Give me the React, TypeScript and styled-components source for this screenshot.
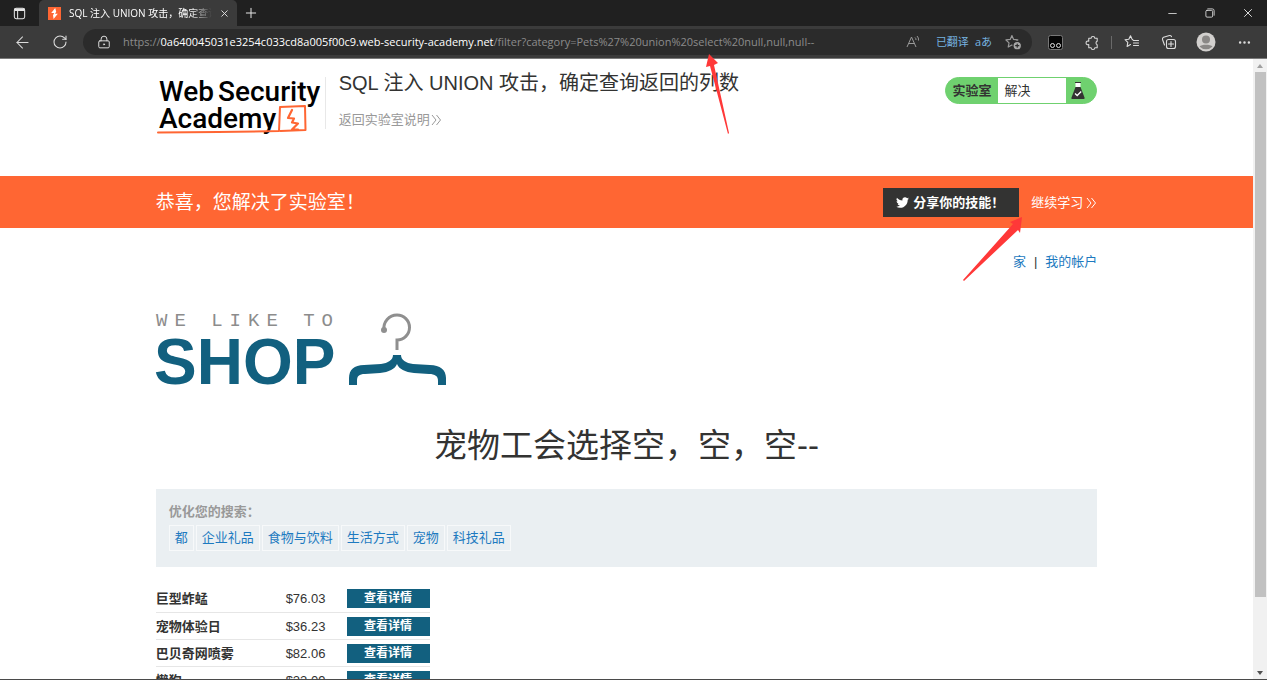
import React from "react";
import styled, { createGlobalStyle } from "styled-components";
import {
  ArrowLeft,
  RotateCw,
  LockKeyhole,
  X,
  Plus,
  Minus,
  Ellipsis,
} from "lucide-react";

const cjk = `"Noto Sans CJK SC", sans-serif`;
const uiFont = `"Open Sans", ${cjk}`;
const pageFont = `"Liberation Sans", ${cjk}`;

const GlobalStyle = createGlobalStyle`
  * { box-sizing: border-box; }
  body { margin: 0; background: #fff; }
  h1, h2, p { margin: 0; font-weight: 400; }
  a { text-decoration: none; }
  button { font: inherit; border: 0; padding: 0; background: none; color: inherit; cursor: pointer; }
  svg { display: block; flex: none; overflow: visible; }
`;

const Window = styled.div`
  position: relative;
  display: flex;
  flex-direction: column;
  height: 100vh;
  overflow: hidden;
  font-family: ${pageFont};
  font-size: 13px;
  line-height: 20px;
  color: #333332;
  border-bottom: 1px solid #4a4a4a;
`;

const TabStrip = styled.div`
  flex: none;
  display: flex;
  height: 26px;
  background: #202020;
  color: #e6e6e6;
  font-family: ${uiFont};
`;

const IconButton = styled.button<{ $w: number }>`
  display: flex;
  align-items: center;
  justify-content: center;
  flex: none;
  width: ${(p) => p.$w}px;
  height: 100%;
`;

const Tab = styled.div`
  display: flex;
  align-items: center;
  width: 198px;
  padding-left: 9px;
  background: #3b3b3b;
  border-radius: 5px 5px 0 0;
`;

const TabTitle = styled.span`
  flex: 1;
  margin-left: 8px;
  overflow: hidden;
  white-space: nowrap;
  font-size: 10px;
  color: #fff;
  mask-image: linear-gradient(to right, #000 85%, transparent);
`;

const Spacer = styled.div`
  flex: 1;
`;

const Toolbar = styled.div`
  flex: none;
  display: flex;
  align-items: center;
  height: 33px;
  padding: 0 4px;
  background: #3b3b3b;
  border-bottom: 1px solid #7a7a7a;
  color: #dcdcdc;
  font-family: ${uiFont};
`;

const AddressBar = styled.div`
  flex: 1;
  display: flex;
  align-items: center;
  height: 26px;
  margin-left: 5px;
  padding: 0 10px 0 14px;
  border-radius: 13px;
  background: #2b2b2b;
  min-width: 0;
`;

const Url = styled.span`
  flex: 1;
  margin-left: 12px;
  overflow: hidden;
  white-space: nowrap;
  font-size: 11px;
  color: #8c8c8c;
  b {
    font-weight: 400;
    color: #fff;
  }
`;

const Translated = styled.button`
  display: flex;
  gap: 6px;
  margin: 0 13px 0 16px;
  font-size: 11px;
  color: #76b3e0;
`;

const Divider = styled.span`
  width: 1px;
  height: 13px;
  margin: 0 1px 0 5px;
  background: #6a6a6a;
`;

const Viewport = styled.div`
  flex: 1;
  display: flex;
  min-height: 0;
`;

const Page = styled.main`
  flex: 1;
  overflow: hidden;
`;

const Container = styled.div`
  width: calc(75% + 2px);
  margin: 0 auto;
`;

const Header = styled(Container)`
  display: flex;
  align-items: flex-start;
  height: 117px;
  padding-top: 11px;
`;

const LogoLink = styled.a`
  margin-top: 7px;
  height: 52px;
  border-right: 1px solid #e8e8e8;
`;

const HeaderText = styled.div`
  flex: 1;
  display: flex;
  margin-left: 13px;
  flex-direction: column;
  align-items: flex-start;
  gap: 14px;
`;

const LabTitle = styled.h2`
  font-size: 20px;
  line-height: 26px;
`;

const MoreLink = styled.a<{ $color: string; $gap: number }>`
  display: inline-flex;
  align-items: center;
  gap: ${(p) => p.$gap}px;
  color: ${(p) => p.$color};
`;

const Status = styled.div`
  display: flex;
  width: 152px;
  height: 27px;
  margin-top: 7px;
  border: 1px solid #6fd16f;
  border-radius: 14px;
  background: #6fd16f;
  line-height: 26px;
  b {
    width: 52px;
    padding-left: 6px;
  }
  span {
    flex: 1;
    padding-left: 6px;
    background: #fff;
  }
  svg {
    margin: 4px 11px 0 5px;
  }
`;

const Banner = styled.section`
  background: #ff6633;
  color: #fff;
`;

const BannerRow = styled(Container)`
  display: flex;
  align-items: center;
  height: 52px;
  padding-top: 1px;
  gap: 12px;
`;

const BannerText = styled.p`
  flex: 1;
  font-size: 19px;
`;

const ShareButton = styled.button`
  display: flex;
  align-items: center;
  gap: 4px;
  height: 29px;
  width: 136px;
  padding-left: 13px;
  background: #333332;
  font-weight: 700;
`;

const TopLinks = styled.nav`
  display: flex;
  justify-content: flex-end;
  gap: 8px;
  padding-top: 24px;
  margin-bottom: 40px;
  a {
    color: #1d7ac0;
  }
`;

const Heading = styled.h1`
  margin: 33px 0 18px;
  font-size: 33px;
  line-height: 50px;
  text-align: center;
`;

const Filters = styled.section`
  height: 78px;
  padding: 13px;
  background: #eaeff2;
`;

const FilterLabel = styled.p`
  font-weight: 700;
  color: #999;
`;

const FilterList = styled.div`
  display: flex;
  gap: 2px;
  margin-top: 3px;
`;

const Filter = styled.a`
  padding: 2px 5px;
  border: 1px solid #f7f9fa;
  color: #1d7ac0;
`;

const Products = styled.table`
  margin-top: 18px;
  width: 274px;
  border-collapse: collapse;
  table-layout: fixed;
  th,
  td {
    height: 27px;
    padding: 4px 0 3px;
    border-bottom: 1px solid #e6e6e6;
    text-align: left;
    line-height: 19px;
    vertical-align: top;
  }
  th {
    width: 130px;
  }
  th + td {
    width: 61px;
  }
`;

const Details = styled.a`
  display: block;
  background: #12607f;
  color: #fff;
  font-size: 12px;
  font-weight: 700;
  text-align: center;
`;

const Scrollbar = styled.div`
  flex: none;
  display: flex;
  flex-direction: column;
  align-items: center;
  justify-content: space-between;
  width: 14px;
  padding: 5px 0 4px;
  background: #f1f1f1;
`;

const Thumb = styled.div`
  width: 11px;
  height: 86%;
  margin-bottom: auto;
  margin-top: 4px;
  background: #c1c1c1;
`;

const Arrow = styled.svg`
  position: absolute;
  pointer-events: none;
`;

const FirstArrow = styled(Arrow)`
  left: 704px;
  top: 54px;
`;

const SecondArrow = styled(Arrow)`
  left: 962px;
  top: 216px;
`;

const Chevrons = () => (
  <svg width="11" height="12" viewBox="0 0 11 12" fill="none" stroke="currentColor">
    <path d="M1 1l4 5-4 5M5.500 1l4 5-4 5" />
  </svg>
);

const Stroke = ({ size = 16, children }: { size?: number; children: React.ReactNode }) => (
  <svg
    width={size}
    height={size}
    viewBox="0 0 16 16"
    fill="none"
    stroke="currentColor"
    strokeWidth="1.1"
    strokeLinejoin="round"
    strokeLinecap="round"
  >
    {children}
  </svg>
);

const star = "M6.500 1.500l1.600 3.600 4 .5-3 2.700.8 4-3.400-2-3.500 2 .8-4-2.900-2.700 4-.5z";

const Favicon = () => (
  <svg width="13" height="13" viewBox="0 0 13 13">
    <path fill="#ff6633" d="M0 0h13v13H0z" />
    <path fill="#fff" d="M7.200 1L3.200 6h3L5 8.200l.6 3.800L9.800 6.800H7L8.200 4.800z" />
  </svg>
);

const AcademyLogo = () => (
  <svg width="169" height="60" viewBox="0 0 169 60" aria-label="Web Security Academy">
    <g fill="#000" fontFamily="Roboto, sans-serif" fontSize="28" fontWeight="500">
      <text x="3" y="24">Web</text>
      <text x="62" y="24">Security</text>
      <text x="3" y="51">Academy</text>
    </g>
    <g fill="none" stroke="#ff6633" strokeWidth="2" strokeLinejoin="round" strokeLinecap="round">
      <path d="M2 55.500l60-.5 61-1 1-24 25-1 .5 24-25 1" />
      <path strokeWidth="2.200" d="M136 33l-4 8 6 .5-2 4 6 1-6 6h6" />
    </g>
  </svg>
);

const ShopLogo = () => (
  <svg width="291" height="76" viewBox="0 0 291 76" aria-label="We like to shop">
    <text x="0" y="14" fill="#8c8c8c" fontFamily="Liberation Mono, monospace" fontSize="19" letterSpacing="7">
      WE LIKE TO
    </text>
    <text x="-2" y="72" fill="#12607f" fontFamily="Liberation Sans, sans-serif" fontSize="64" fontWeight="700">
      SHOP
    </text>
    <path fill="none" stroke="#8f8f8f" strokeWidth="3" d="M228 18c-1-8 5-15 13-15a12.500 12.500 0 0 1 0 25v10" />
    <circle cx="228" cy="18" r="3" fill="#8f8f8f" />
    <path
      fill="#12607f"
      d="M193 73v-7c0-8 5-13 15-13l17-1c7-1 12-4 12-9h8c0 5 5 8 12 9l17 1c10 0 16 5 16 13v7h-8v-4c0-5-3-7-9-7l-15-1c-9-1-15-4-17-9-2 5-8 8-17 9l-15 1c-6 0-8 2-8 7v4z"
    />
  </svg>
);

const FlaskIcon = () => (
  <svg width="14" height="18" viewBox="0 0 14 18">
    <path fill="#fff" d="M4.500 1h5v4h-5z" />
    <path fill="#333332" d="M4.500 5h5l4 10.500c.4 1-.2 1.500-1 1.500h-11c-.8 0-1.400-.5-1-1.500z" />
    <path fill="none" stroke="#333332" d="M4 .5h6" />
    <path fill="none" stroke="#fff" strokeWidth="1.300" d="M4 11.500l2.200 2 4-4" />
  </svg>
);

const TwitterIcon = () => (
  <svg width="13" height="13" viewBox="0 0 24 24" fill="#fff">
    <path d="M23.950 4.570a10 10 0 0 1-2.820.770 4.960 4.960 0 0 0 2.160-2.720 9.900 9.900 0 0 1-3.120 1.180 4.920 4.920 0 0 0-8.380 4.480C7.690 8.090 4.070 6.130 1.640 3.160a4.920 4.920 0 0 0 1.520 6.570 4.900 4.900 0 0 1-2.230-.610v.060a4.920 4.920 0 0 0 3.950 4.830 5 5 0 0 1-2.210.080 4.940 4.940 0 0 0 4.600 3.420A9.870 9.870 0 0 1 0 19.540a14 14 0 0 0 7.550 2.210c9.050 0 14-7.500 14-13.980 0-.210 0-.420-.020-.630a9.940 9.940 0 0 0 2.460-2.550z" />
  </svg>
);

const categories = ["都", "企业礼品", "食物与饮料", "生活方式", "宠物", "科技礼品"];

const products = [
  ["巨型蚱蜢", "$76.03"],
  ["宠物体验日", "$36.23"],
  ["巴贝奇网喷雾", "$82.06"],
  ["懒狗", "$22.09"],
];

const BrowserChrome = () => (
  <>
    <TabStrip>
      <IconButton $w={39} aria-label="标签操作">
        <Stroke size={15}>
          <rect x="2.500" y="2.500" width="11" height="11" rx="2" />
          <path strokeWidth="2.500" d="M3.500 4h9" />
          <path d="M6 5v8" />
        </Stroke>
      </IconButton>
      <Tab>
        <Favicon />
        <TabTitle>SQL 注入 UNION 攻击，确定查询返回的列数</TabTitle>
        <IconButton $w={25} aria-label="关闭标签页">
          <X size={11} />
        </IconButton>
      </Tab>
      <IconButton $w={28} aria-label="新建标签页">
        <Plus size={16} strokeWidth={1.5} />
      </IconButton>
      <Spacer />
      <IconButton $w={38} aria-label="最小化">
        <Minus size={13} strokeWidth={1.5} />
      </IconButton>
      <IconButton $w={38} aria-label="还原">
        <Stroke size={12}>
          <rect x="2.500" y="4.500" width="9" height="9" rx="1.500" />
          <path d="M5 2.500h6a2.500 2.500 0 0 1 2.500 2.500v6" />
        </Stroke>
      </IconButton>
      <IconButton $w={38} aria-label="关闭">
        <X size={14} strokeWidth={1.6} />
      </IconButton>
    </TabStrip>
    <Toolbar>
      <IconButton $w={37} aria-label="返回">
        <ArrowLeft size={19} strokeWidth={1.3} />
      </IconButton>
      <IconButton $w={37} aria-label="刷新">
        <RotateCw size={16} strokeWidth={1.6} />
      </IconButton>
      <AddressBar>
        <LockKeyhole size={14} strokeWidth={1.7} />
        <Url>
          https://<b>0a640045031e3254c033cd8a005f00c9.web-security-academy.net</b>
          /filter?category=Pets%27%20union%20select%20null,null,null--
        </Url>
        <IconButton $w={14} aria-label="大声朗读">
          <svg width="14" height="14" viewBox="0 0 14 14" fill="none" stroke="#999">
            <path d="M1 12L5.500 2 10 12M2.500 8.500h6M9 2.500a3 3 0 0 1 1 2.500M11 1a5 5 0 0 1 1.500 4.500" />
          </svg>
        </IconButton>
        <Translated>
          <span>已翻译</span>
          <span>aあ</span>
        </Translated>
        <IconButton $w={17} aria-label="收藏">
          <Stroke size={17}>
            <path stroke="#999" d={star} />
            <circle cx="11.500" cy="11" r="4" fill="#a8a8a8" stroke="#2b2b2b" />
            <path stroke="#2b2b2b" d="M11.500 9.500v3M10 11h3" />
          </Stroke>
        </IconButton>
      </AddressBar>
      <IconButton $w={46} aria-label="扩展程序">
        <svg width="15" height="15" viewBox="0 0 15 15">
          <rect x=".5" y=".5" width="14" height="14" rx="2" fill="#050505" stroke="#777" />
          <g fill="none" stroke="#ddd">
            <circle cx="4.500" cy="10.500" r="2" />
            <circle cx="10.500" cy="10.500" r="2" />
          </g>
        </svg>
      </IconButton>
      <IconButton $w={28} aria-label="扩展">
        <Stroke size={15}>
          <path d="M4 3.500h2.500a2 2 0 0 1 4 0H13v3.200a1.900 1.900 0 0 0 0 3.600v3.200h-2.500a2 2 0 0 1-4 0H4v-3.300a2 2 0 1 1 0-3.600z" />
        </Stroke>
      </IconButton>
      <Divider />
      <IconButton $w={38} aria-label="收藏夹">
        <Stroke>
          <path d="M9 6l-1-.9L6.500 1.800 4.800 5.200 1 5.700l2.800 2.700-.7 4 3.400-1.900M9.500 6.500h5M9.500 9h5M9.500 11.500h5" />
        </Stroke>
      </IconButton>
      <IconButton $w={36} aria-label="集锦">
        <Stroke>
          <rect x="5.500" y="5.500" width="9" height="9" rx="2" />
          <path d="M10 7.500v5M7.500 10h5M3.500 11l-2-5.500c-.3-1 .2-1.800 1-2.200l6-1.800c1-.2 1.800.3 2 1.200" />
        </Stroke>
      </IconButton>
      <IconButton $w={38} aria-label="个人资料">
        <svg width="20" height="20" viewBox="0 0 20 20">
          <circle cx="10" cy="10" r="9.500" fill="#d2d0ce" />
          <circle cx="10" cy="7.500" r="4" fill="#8a8886" />
          <path d="M3.500 14.500c2-2.500 11-2.500 13 0a9 9 0 0 1-13 0z" fill="#8a8886" />
        </svg>
      </IconButton>
      <IconButton $w={38} aria-label="设置及其他">
        <Ellipsis size={15} />
      </IconButton>
    </Toolbar>
  </>
);

export default function App() {
  return (
    <Window lang="zh-CN">
      <GlobalStyle />
      <BrowserChrome />
      <Viewport>
        <Page>
          <Header as="header">
            <LogoLink href="#">
              <AcademyLogo />
            </LogoLink>
            <HeaderText>
              <LabTitle>SQL 注入 UNION 攻击，确定查询返回的列数</LabTitle>
              <MoreLink href="#" $color="#999" $gap={1}>
                返回实验室说明
                <Chevrons />
              </MoreLink>
            </HeaderText>
            <Status>
              <b>实验室</b>
              <span>解决</span>
              <FlaskIcon />
            </Status>
          </Header>
          <Banner>
            <BannerRow>
              <BannerText>恭喜，您解决了实验室！</BannerText>
              <ShareButton>
                <TwitterIcon />
                分享你的技能！
              </ShareButton>
              <MoreLink href="#" $color="#fff" $gap={3}>
                继续学习
                <Chevrons />
              </MoreLink>
            </BannerRow>
          </Banner>
          <Container>
            <TopLinks>
              <a href="#">家</a>
              <span>|</span>
              <a href="#">我的帐户</a>
            </TopLinks>
            <ShopLogo />
            <Heading>宠物工会选择空，空，空--</Heading>
            <Filters>
              <FilterLabel>优化您的搜索：</FilterLabel>
              <FilterList>
                {categories.map((c) => (
                  <Filter href="#" key={c}>
                    {c}
                  </Filter>
                ))}
              </FilterList>
            </Filters>
            <Products>
              <tbody>
                {products.map(([name, price]) => (
                  <tr key={name}>
                    <th scope="row">{name}</th>
                    <td>{price}</td>
                    <td>
                      <Details href="#">查看详情</Details>
                    </td>
                  </tr>
                ))}
              </tbody>
            </Products>
          </Container>
        </Page>
        <Scrollbar aria-hidden="true">
          <svg width="6" height="4" viewBox="0 0 6 4">
            <path fill="#a0a0a0" d="M0 4l3-4 3 4z" />
          </svg>
          <Thumb />
          <svg width="6" height="4" viewBox="0 0 6 4">
            <path fill="#505050" d="M0 0l3 4 3-4z" />
          </svg>
        </Scrollbar>
      </Viewport>
      <FirstArrow width="26" height="82" viewBox="0 0 26 82">
        <path fill="#ff3838" d="M5 0L2 13l4-1 18 68 1-1L10 11l4-2z" />
      </FirstArrow>
      <SecondArrow width="62" height="66" viewBox="0 0 62 66">
        <path fill="#ff3838" d="M60 1L48 6l3 2L1 64l1 1L56 14l2 3z" />
      </SecondArrow>
    </Window>
  );
}
